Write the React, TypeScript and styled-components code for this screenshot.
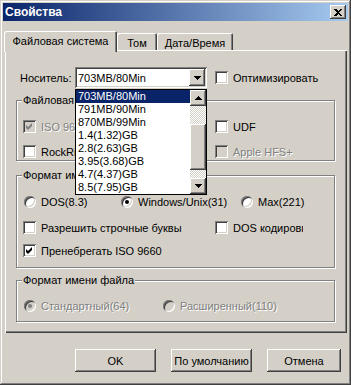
import React from 'react';
import styled, { createGlobalStyle, css } from 'styled-components';

const FACE = '#d4d0c8';
const SHADOW = '#808080';
const DARK = '#404040';
const HILITE = '#ffffff';
const SELECT = '#0a246a';
const FONT = `'Liberation Sans', Arial, sans-serif`;

const GlobalStyle = createGlobalStyle`
  html, body {
    margin: 0;
    padding: 0;
    background: ${FACE};
  }
  body {
    font-family: ${FONT};
    font-size: 11px;
    color: #000;
  }
  * {
    box-sizing: border-box;
  }
`;

const raised = css`
  background: ${FACE};
  box-shadow: inset -1px -1px ${DARK}, inset 1px 1px ${HILITE}, inset -2px -2px ${SHADOW}, inset 2px 2px ${FACE};
`;

const sunken = css`
  box-shadow: inset 1px 1px ${SHADOW}, inset -1px -1px ${HILITE}, inset 2px 2px ${DARK}, inset -2px -2px ${FACE};
`;

const Window = styled.div`
  width: 351px;
  height: 385px;
  padding: 3px;
  background: ${FACE};
  box-shadow: inset -1px -1px ${DARK}, inset 1px 1px ${FACE}, inset -2px -2px ${SHADOW}, inset 2px 2px ${HILITE};
  display: flex;
  flex-direction: column;
`;

const TitleBar = styled.div`
  height: 18px;
  display: flex;
  align-items: center;
  justify-content: space-between;
  padding: 0 2px 0 2px;
  background: linear-gradient(to right, #0a246a, #a6caf0);
`;

const Title = styled.span`
  color: #fff;
  font-weight: bold;
  font-size: 12px;
`;

const CloseButton = styled.div`
  ${raised};
  width: 16px;
  height: 14px;
  display: flex;
  align-items: center;
  justify-content: center;
`;

const Body = styled.div`
  flex: 1;
  display: flex;
  flex-direction: column;
  padding: 0 1px 0 2px;
`;

const TabRow = styled.div`
  margin-top: 10px;
  height: 19px;
  display: flex;
  align-items: flex-end;
  position: relative;
  z-index: 2;
`;

const Tab = styled.div<{ $active?: boolean; $w: number }>`
  width: ${p => p.$w}px;
  height: ${p => (p.$active ? 21 : 17)}px;
  margin-bottom: ${p => (p.$active ? -2 : 0)}px;
  margin-left: ${p => (p.$active ? -1 : 0)}px;
  padding: ${p => (p.$active ? '0 0 2px' : '2px 0 0')};
  background: ${FACE};
  border-radius: 2px 2px 0 0;
  box-shadow: inset 1px 1px ${HILITE}, inset -1px 0 ${DARK}, inset -2px 0 ${SHADOW};
  display: flex;
  align-items: center;
  justify-content: center;
  white-space: nowrap;
`;

const Panel = styled.div`
  height: 283px;
  position: relative;
  z-index: 1;
  padding: 17px 12px 0 11px;
  box-shadow: inset 1px 1px ${HILITE}, inset -1px -1px ${DARK}, inset -2px -2px ${SHADOW};
  display: flex;
  flex-direction: column;
`;

const ComboRow = styled.div`
  height: 21px;
  display: flex;
  align-items: center;
`;

const FieldLabel = styled.span`
  width: 55px;
  margin-left: 4px;
`;

const Combo = styled.div`
  position: relative;
  width: 132px;
  height: 21px;
  margin-right: 8px;
  background: #fff;
  ${sunken};
  display: flex;
  align-items: center;
  justify-content: space-between;
  padding: 2px 2px 2px 3px;
`;

const DropButton = styled.div`
  ${raised};
  width: 16px;
  height: 17px;
  display: flex;
  align-items: center;
  justify-content: center;
`;

const DropList = styled.div`
  position: absolute;
  top: calc(100% + 1px);
  left: 0;
  width: 132px;
  height: 106px;
  border: 1px solid #000;
  background: #fff;
  display: flex;
  z-index: 5;
`;

const Items = styled.div`
  flex: 1;
  display: flex;
  flex-direction: column;
`;

const Item = styled.div<{ $selected?: boolean }>`
  height: 13px;
  line-height: 13px;
  padding-left: 2px;
  background: ${p => (p.$selected ? SELECT : 'transparent')};
  color: ${p => (p.$selected ? '#fff' : '#000')};
`;

const ScrollBar = styled.div`
  width: 16px;
  display: flex;
  flex-direction: column;
`;

const ScrollButton = styled.div`
  ${raised};
  width: 16px;
  height: 16px;
  flex: none;
  display: flex;
  align-items: center;
  justify-content: center;
`;

const Track = styled.div<{ $h?: number }>`
  ${p => (p.$h ? `height: ${p.$h}px; flex: none;` : 'flex: 1;')}
  background-color: #fff;
  background-image: repeating-conic-gradient(${FACE} 0 25%, #fff 0 50%);
  background-size: 2px 2px;
`;

const Thumb = styled.div`
  ${raised};
  height: 46px;
  flex: none;
`;

const GroupBox = styled.div<{ $h: number; $pt: number }>`
  position: relative;
  width: 319px;
  height: ${p => p.$h}px;
  padding: ${p => p.$pt}px 0 0 6px;
  border: 1px solid ${SHADOW};
  box-shadow: inset 1px 1px ${HILITE}, 1px 1px 0 ${HILITE};
  display: flex;
  flex-direction: column;
`;

const Legend = styled.span`
  position: absolute;
  top: -7px;
  left: 5px;
  padding: 0 1px;
  line-height: 13px;
  background: ${FACE};
`;

const Spacer = styled.div<{ $h: number }>`
  height: ${p => p.$h}px;
  flex: none;
`;

const OptionGrid = styled.div<{ $cols: string; $gap?: number; $mt?: number }>`
  display: grid;
  grid-template-columns: ${p => p.$cols};
  row-gap: ${p => p.$gap ?? 12}px;
  margin-top: ${p => p.$mt ?? 0}px;
  align-items: center;
`;

const Option = styled.label`
  display: flex;
  align-items: center;
  gap: 5px;
  height: 13px;
  white-space: nowrap;
`;

const Caption = styled.span<{ $disabled?: boolean; $clip?: number }>`
  color: ${p => (p.$disabled ? SHADOW : '#000')};
  text-shadow: ${p => (p.$disabled ? `1px 1px 0 ${HILITE}` : 'none')};
  ${p => (p.$clip ? `max-width: ${p.$clip}px; overflow: hidden;` : '')}
`;

const Box = styled.span<{ $disabled?: boolean }>`
  width: 13px;
  height: 13px;
  flex: none;
  display: block;
  background: ${p => (p.$disabled ? FACE : '#fff')};
  ${sunken};
`;

const RadioCircle = styled.span<{ $disabled?: boolean }>`
  width: 12px;
  height: 12px;
  margin-left: 1px;
  flex: none;
  border-radius: 50%;
  background: ${p => (p.$disabled ? FACE : '#fff')};
  box-shadow: inset 1px 1px ${SHADOW}, inset -1px -1px ${HILITE}, inset 2px 2px ${DARK}, inset -2px -2px ${FACE};
  display: flex;
  align-items: center;
  justify-content: center;
`;

const Dot = styled.span<{ $disabled?: boolean }>`
  width: 4px;
  height: 4px;
  border-radius: 50%;
  background: ${p => (p.$disabled ? SHADOW : '#000')};
`;

const ButtonRow = styled.div`
  margin-top: 16px;
  display: flex;
  justify-content: flex-end;
  gap: 15px;
  padding-right: 6px;
`;

const PushButton = styled.div<{ $w: number }>`
  ${raised};
  width: ${p => p.$w}px;
  height: 23px;
  display: flex;
  align-items: center;
  justify-content: center;
`;

const Arrow = ({ down }: { down?: boolean }) => (
  <svg width="7" height="4" viewBox="0 0 7 4" shapeRendering="crispEdges">
    <polygon points={down ? '0,0 7,0 3.5,4' : '0,4 7,4 3.5,0'} fill="#000" />
  </svg>
);

type OptionProps = { label: string; checked?: boolean; disabled?: boolean; clip?: number };

const CheckBox = ({ label, checked, disabled, clip }: OptionProps) => (
  <Option>
    <Box $disabled={disabled}>
      {checked && (
        <svg width="13" height="13" viewBox="0 0 13 13" style={{ display: 'block' }}>
          <polygon points="3,5 5,7 9,3 9,6 5,10 3,8" fill={disabled ? SHADOW : '#000'} />
        </svg>
      )}
    </Box>
    <Caption $disabled={disabled} $clip={clip}>{label}</Caption>
  </Option>
);

const Radio = ({ label, checked, disabled }: OptionProps) => (
  <Option>
    <RadioCircle $disabled={disabled}>{checked && <Dot $disabled={disabled} />}</RadioCircle>
    <Caption $disabled={disabled}>{label}</Caption>
  </Option>
);

const media = [
  '703MB/80Min',
  '791MB/90Min',
  '870MB/99Min',
  '1.4(1.32)GB',
  '2.8(2.63)GB',
  '3.95(3.68)GB',
  '4.7(4.37)GB',
  '8.5(7.95)GB',
];

export default function App() {
  return (
    <>
      <GlobalStyle />
      <Window>
        <TitleBar>
          <Title>Свойства</Title>
          <CloseButton>
            <svg width="8" height="7" viewBox="0 0 8 7" shapeRendering="crispEdges">
              <path d="M0 0h2l2 2 2-2h2L5 3.5 8 7H6L4 5 2 7H0l3-3.5z" fill="#000" />
            </svg>
          </CloseButton>
        </TitleBar>
        <Body>
          <TabRow>
            <Tab $active $w={113}>Файловая система</Tab>
            <Tab $w={40}>Том</Tab>
            <Tab $w={76}>Дата/Время</Tab>
          </TabRow>
          <Panel>
            <ComboRow>
              <FieldLabel>Носитель:</FieldLabel>
              <Combo>
                <span>703MB/80Min</span>
                <DropButton>
                  <Arrow down />
                </DropButton>
                <DropList>
                  <Items>
                    {media.map((m, i) => (
                      <Item key={m} $selected={i === 0}>
                        {m}
                      </Item>
                    ))}
                  </Items>
                  <ScrollBar>
                    <ScrollButton>
                      <Arrow />
                    </ScrollButton>
                    <Track $h={18} />
                    <Thumb />
                    <Track />
                    <ScrollButton>
                      <Arrow down />
                    </ScrollButton>
                  </ScrollBar>
                </DropList>
              </Combo>
              <CheckBox label="Оптимизировать" />
            </ComboRow>

            <Spacer $h={12} />
            <GroupBox $h={61} $pt={19}>
              <Legend>Файловая система</Legend>
              <OptionGrid $cols="192px 1fr">
                <CheckBox label="ISO 9660" checked disabled />
                <CheckBox label="UDF" />
                <CheckBox label="RockRidge" />
                <CheckBox label="Apple HFS+" disabled />
              </OptionGrid>
            </GroupBox>

            <Spacer $h={14} />
            <GroupBox $h={93} $pt={19}>
              <Legend>Формат имени ISO</Legend>
              <OptionGrid $cols="97px 120px 1fr">
                <Radio label="DOS(8.3)" />
                <Radio label="Windows/Unix(31)" checked />
                <Radio label="Max(221)" />
              </OptionGrid>
              <OptionGrid $cols="192px 1fr" $gap={10} $mt={13}>
                <CheckBox label="Разрешить строчные буквы" />
                <CheckBox label="DOS кодировка" clip={70} />
                <CheckBox label="Пренебрегать ISO 9660" checked />
              </OptionGrid>
            </GroupBox>

            <Spacer $h={12} />
            <GroupBox $h={42} $pt={18}>
              <Legend>Формат имени файла</Legend>
              <OptionGrid $cols="139px 1fr">
                <Radio label="Стандартный(64)" checked disabled />
                <Radio label="Расширенный(110)" disabled />
              </OptionGrid>
            </GroupBox>
          </Panel>
          <ButtonRow>
            <PushButton $w={81}>OK</PushButton>
            <PushButton $w={81}>По умолчанию</PushButton>
            <PushButton $w={74}>Отмена</PushButton>
          </ButtonRow>
        </Body>
      </Window>
    </>
  );
}
